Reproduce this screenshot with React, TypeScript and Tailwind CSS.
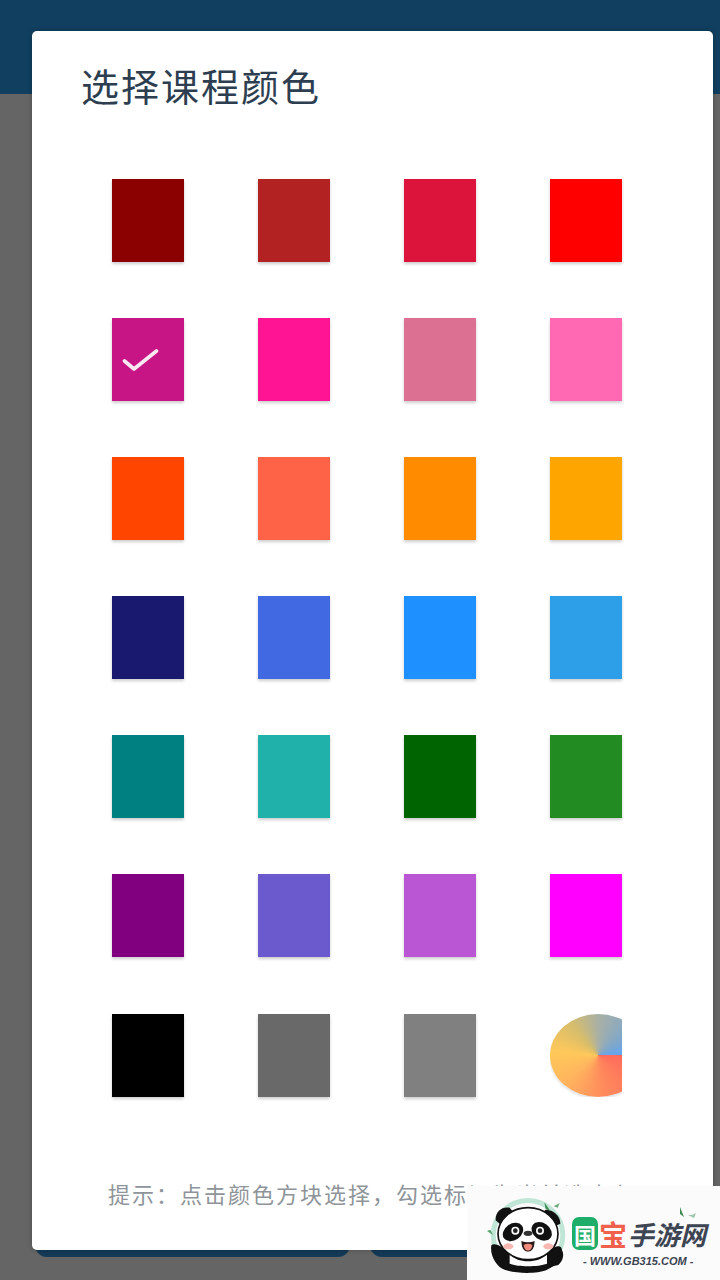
const rows: string[][] = [
  ["bg-[#8b0000]", "bg-[#b22222]", "bg-[#dc143c]", "bg-[#ff0000]"],
  ["bg-[#c71585]", "bg-[#ff1493]", "bg-[#db7093]", "bg-[#ff69b4]"],
  ["bg-[#ff4500]", "bg-[#ff6347]", "bg-[#ff8c00]", "bg-[#ffa500]"],
  ["bg-[#191970]", "bg-[#4169e1]", "bg-[#1e90ff]", "bg-[#2d9fe8]"],
  ["bg-[#008080]", "bg-[#20b2aa]", "bg-[#006400]", "bg-[#228b22]"],
  ["bg-[#800080]", "bg-[#6a5acd]", "bg-[#ba55d3]", "bg-[#ff00ff]"],
  ["bg-[#000000]", "bg-[#696969]", "bg-[#808080]", ""],
];

function Panda() {
  return (
    <svg width="90" height="80" viewBox="70 80 270 240" className="shrink-0">
      {/* ring */}
      <circle cx="205" cy="195" r="112" fill="#bfe6d6" />
      <circle cx="205" cy="195" r="97" fill="#fbfbfb" />
      {/* ears */}
      <path d="M108 150 C106 125 125 108 150 112 L165 130 L125 165 Z" fill="#111" />
      <path d="M258 118 C280 118 302 135 302 160 L285 168 L245 130 Z" fill="#111" />
      {/* body */}
      <path d="M95 225 C90 255 110 290 135 298 C165 310 235 312 262 298 C295 285 315 255 305 232 C295 222 275 232 262 250 L150 250 C135 232 105 215 95 225 Z" fill="#111" />
      <path d="M150 250 C170 280 240 280 262 250 L262 280 C235 290 175 290 150 280 Z" fill="#fbfbfb" />
      {/* head */}
      <ellipse cx="205" cy="190" rx="90" ry="78" fill="#fff" stroke="#111" strokeWidth="5" />
      {/* eye patches */}
      <ellipse cx="160" cy="185" rx="33" ry="25" fill="#111" transform="rotate(-35 160 185)" />
      <ellipse cx="246" cy="183" rx="33" ry="25" fill="#111" transform="rotate(35 246 183)" />
      <circle cx="167" cy="181" r="12" fill="#fff" />
      <circle cx="167" cy="181" r="7" fill="#222" />
      <circle cx="241" cy="181" r="12" fill="#fff" />
      <circle cx="241" cy="181" r="7" fill="#222" />
      {/* nose + mouth */}
      <ellipse cx="205" cy="189" rx="13" ry="8" fill="#333" />
      <path d="M185 212 Q205 220 225 212 Q224 244 205 244 Q186 244 185 212 Z" fill="#2a1a1a" />
      <path d="M192 224 Q205 216 218 224 Q216 241 205 241 Q194 241 192 224 Z" fill="#f2897e" />
      {/* cheeks */}
      <ellipse cx="146" cy="228" rx="15" ry="9" fill="#f6b8b0" />
      <ellipse cx="266" cy="228" rx="15" ry="9" fill="#f6b8b0" />
      {/* paw */}
      <path d="M262 262 C262 240 285 228 302 236 C316 245 312 270 296 284 L270 290 Z" fill="#111" />
      {/* leaves */}
      <path d="M82 182 L100 194 L92 178 Z" fill="#5aa06a" />
      <path d="M254 96 L272 122 L258 116 Z" fill="#3f8a55" />
      <path d="M282 108 L300 98 L294 112 Z" fill="#6aa87a" />
    </svg>
  );
}

export default function App() {
  return (
    <div
      className="relative w-[720px] h-[1280px] overflow-hidden bg-[#656565] flex flex-col"
      style={{ fontFamily: '"Noto Sans CJK SC", "Noto Sans", sans-serif' }}
    >
      <div className="h-[94px] bg-[#113f5f]" />
      <div className="flex-1" />
      <div className="flex gap-5 pl-[35px] pr-[35px] mb-[23px]">
        <div className="h-[20px] w-[315px] rounded-b-xl bg-[#143a57]" />
        <div className="h-[20px] flex-1 rounded-b-xl bg-[#143a57]" />
      </div>

      <div className="absolute left-[32px] top-[31px] w-[681px] h-[1219px] bg-white rounded-[5px] flex flex-col shadow-[0_0_5px_rgba(0,0,0,0.25)]">
        <div className="pl-[49px] pt-[28px] h-[148px] text-[38px] leading-[52px] tracking-[2px] text-[#2c3e50] whitespace-nowrap">
          选择课程颜色
        </div>
        <div className="flex flex-col gap-[56px] pl-[80px]">
          {rows.map((row, i) => (
            <div key={i} className={`flex gap-[74px] ${i === 6 ? "mt-[1px]" : ""}`}>
              {row.map((c, j) =>
                c ? (
                  <div
                    key={j}
                    className={`relative w-[72px] h-[83px] shadow-[0_2px_3px_rgba(0,0,0,0.2)] ${c}`}
                  >
                    {i === 1 && j === 0 && (
                      <svg
                        width="38"
                        height="28"
                        viewBox="0 0 38 28"
                        fill="none"
                        className="absolute left-[10px] top-[29px]"
                      >
                        <path d="M2.5 14 L12 22 L34.5 4" stroke="#fbe8f3" strokeWidth="3.6" strokeLinecap="round" strokeLinejoin="round" />
                      </svg>
                    )}
                  </div>
                ) : (
                  <div key={j} className="w-[72px] h-[83px] overflow-hidden">
                    <div className="w-[96px] h-[83px] rounded-[50%] bg-[conic-gradient(#a9b0a4_0deg,#7ba6cf_60deg,#5fa5f5_90deg,#ff6a5c_90deg,#ff8a5c_170deg,#ffb45e_230deg,#ffc85a_275deg,#d6bd6c_320deg,#a9b0a4_360deg)] shadow-[0_2px_3px_rgba(0,0,0,0.12)]" />
                  </div>
                )
              )}
            </div>
          ))}
        </div>
        <div className="pl-[76px] pt-[81px] text-[22px] leading-[30px] tracking-[2px] text-[#8e9499] whitespace-nowrap">
          提示：点击颜色方块选择，勾选标记为当前选中色
        </div>
      </div>

      <div className="absolute right-0 bottom-0 w-[253px] h-[94px] bg-[#fbfbfb] flex items-start pl-[16px]">
        <div className="relative mt-[11px]">
          <Panda />
        </div>
        <div className="relative flex flex-col items-start -ml-[1px] mt-[31px]">
          <div className="flex items-center h-[33px] whitespace-nowrap">
            <span className="flex items-center justify-center w-[26px] h-[33px] rounded-[7px] bg-[#1fae6a] text-white text-[22px] font-bold leading-none">
              国
            </span>
            <span className="text-[#f0604c] text-[28px] font-bold leading-none ml-[1px]">宝</span>
            <span className="text-[#3d4452] text-[26px] font-bold italic leading-none ml-[1px]">手游网</span>
          </div>
          <div
            className="mt-[4px] ml-[11px] text-[11px] leading-[14px] font-bold italic text-[#3d4452] whitespace-nowrap"
            style={{ fontFamily: '"Liberation Sans", sans-serif' }}
          >
            - WWW.GB315.COM -
          </div>
          <svg width="20" height="14" viewBox="0 0 20 14" className="absolute left-[106px] -top-[10px]">
            <path d="M2 0 L6 10 L2 7 Z" fill="#3f8a55" />
            <path d="M10 8 L16 11 L18 6 L14 8 Z" fill="#9cc4aa" />
          </svg>
        </div>
      </div>
    </div>
  );
}
